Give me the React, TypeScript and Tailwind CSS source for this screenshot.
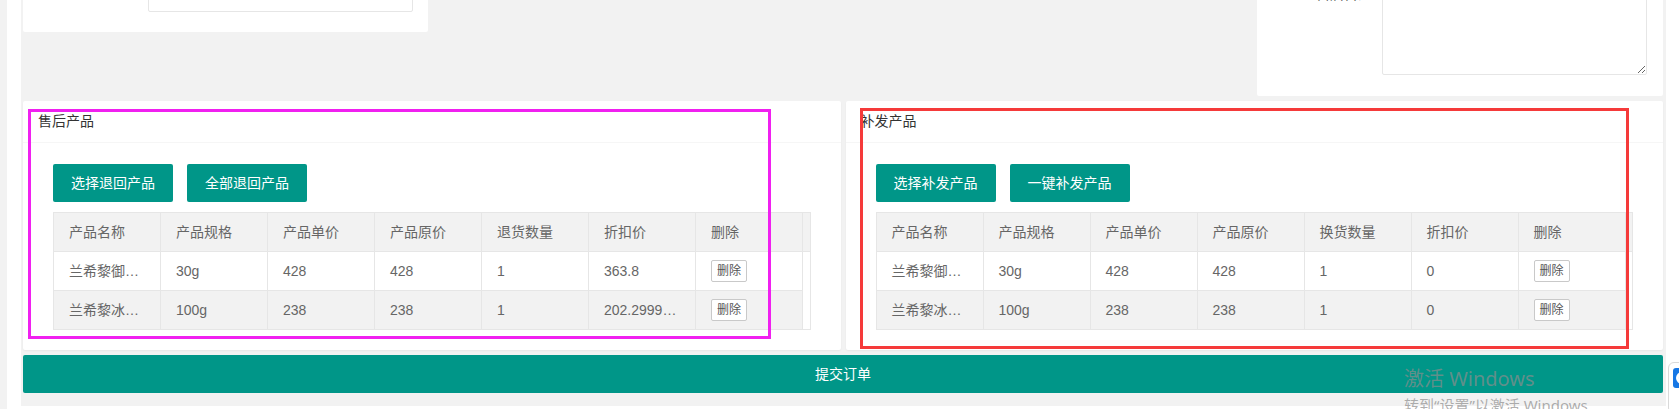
import React from 'react';

type Row = {
  name: string;
  spec: string;
  price: string;
  origin: string;
  qty: string;
  discount: string;
};

const returnRows: Row[] = [
  { name: '兰希黎御龙水润面霜', spec: '30g', price: '428', origin: '428', qty: '1', discount: '363.8' },
  { name: '兰希黎冰泉补水面膜', spec: '100g', price: '238', origin: '238', qty: '1', discount: '202.29999999999998' },
];

const resendRows: Row[] = [
  { name: '兰希黎御龙水润面霜', spec: '30g', price: '428', origin: '428', qty: '1', discount: '0' },
  { name: '兰希黎冰泉补水面膜', spec: '100g', price: '238', origin: '238', qty: '1', discount: '0' },
];

const ProductTable: React.FC<{ qtyLabel: string; rows: Row[] }> = ({ qtyLabel, rows }) => {
  const heads = ['产品名称', '产品规格', '产品单价', '产品原价', qtyLabel, '折扣价', '删除'];
  return (
    <div className="w-full border border-[#e6e6e6] text-[14px] text-[#666]">
      <div className="flex h-[39px] border-b border-[#e6e6e6] bg-[#f2f2f2]">
        {heads.map((h) => (
          <div key={h} className="w-[107px] shrink-0 border-r border-[#e6e6e6] px-[15px] leading-[38px] truncate">
            {h}
          </div>
        ))}
        <div className="flex-1" />
      </div>
      {rows.map((r, i) => (
        <div
          key={r.name}
          className={`flex w-[749px] ${i === rows.length - 1 ? 'h-[38px]' : 'h-[39px] border-b border-[#e6e6e6]'} ${i % 2 === 1 ? 'bg-[#f2f2f2]' : 'bg-white'}`}
        >
          {[r.name, r.spec, r.price, r.origin, r.qty, r.discount].map((v, j) => (
            <div key={j} className="w-[107px] shrink-0 border-r border-[#e6e6e6] px-[15px] leading-[38px] truncate">
              {v}
            </div>
          ))}
          <div className="w-[107px] shrink-0 border-r border-[#e6e6e6] px-[15px] flex items-center">
            <button className="h-[22px] px-[5px] border border-[#c9c9c9] rounded-[2px] bg-white text-[12px] leading-[20px] text-[#555]">
              删除
            </button>
          </div>
        </div>
      ))}
    </div>
  );
};

const Panel: React.FC<{ title: string; actions: string[]; qtyLabel: string; rows: Row[] }> = ({ title, actions, qtyLabel, rows }) => (
  <div className="bg-white rounded-[2px] shadow-[0_1px_2px_0_rgba(0,0,0,0.05)]">
    <div className="h-[42px] leading-[41px] px-[15px] border-b border-[#f6f6f6] text-[14px] text-[#333]">{title}</div>
    <div className="px-[30px] pt-[21px] pb-[20px]">
      <div className="flex gap-[14px] mb-[10px]">
        {actions.map((a) => (
          <button key={a} className="h-[38px] w-[120px] rounded-[2px] bg-[#009688] text-white text-[14px]">
            {a}
          </button>
        ))}
      </div>
      <ProductTable qtyLabel={qtyLabel} rows={rows} />
    </div>
  </div>
);

export default function App() {
  return (
    <div className="relative flex w-[1679px] h-[409px] overflow-hidden bg-white font-['Liberation_Sans','Noto_Sans_CJK_SC',sans-serif]">
      <div className="w-[7px] bg-[#f2f2f2]" />
      <div className="w-[14px]" />
      <div className="w-[1645px] h-[406px] bg-[#f2f2f2] pl-[2px] pr-[3px] flex flex-col">
        {/* scrolled-off form cards */}
        <div className="-mt-[40px] flex justify-between items-start">
          <div className="w-[405px] bg-white rounded-[2px] px-[15px] pt-[14px] pb-[20px] flex">
            <label className="w-[110px] pr-[10px] text-right text-[14px] leading-[20px] text-[#333]">收货人</label>
            <input className="flex-1 h-[38px] border border-[#e6e6e6] rounded-[2px] bg-white" />
          </div>
          <div className="w-[406px] bg-white rounded-[2px] px-[16px] pt-[15px] pb-[21px] flex">
            <label className="w-[109px] pt-[9px] pr-[10px] text-right text-[14px] leading-[20px] text-[#333]">售后备注</label>
            <textarea className="flex-1 h-[100px] border border-[#e6e6e6] rounded-[2px] bg-white" />
          </div>
        </div>

        <div className="mt-[5px] grid grid-cols-2 gap-[5px]">
          <Panel title="售后产品" actions={['选择退回产品', '全部退回产品']} qtyLabel="退货数量" rows={returnRows} />
          <Panel title="补发产品" actions={['选择补发产品', '一键补发产品']} qtyLabel="换货数量" rows={resendRows} />
        </div>

        <button className="mt-[5px] h-[38px] w-full rounded-[2px] bg-[#009688] text-white text-[14px]">提交订单</button>
      </div>

      {/* annotation boxes */}
      <div className="absolute left-[28px] top-[109px] w-[743px] h-[230px] border-[3px] border-[#f020f0]" />
      <div className="absolute left-[860px] top-[108px] w-[769px] h-[241px] border-[3px] border-[#f53a3a]" />

      {/* floating side widget */}
      <div className="absolute left-[1668px] top-[362px] w-[20px] h-[52px] border border-[#d9d9d9] rounded-l-[6px] bg-white">
        <div className="absolute left-[4px] top-[5px] w-[20px] h-[20px] rounded-[3px] bg-[#1677e5] flex items-center pl-[2px]">
          <svg width="14" height="14" viewBox="0 0 14 14">
            <circle cx="7" cy="7" r="6" fill="white" />
            <path d="M8.5 4 L5 7 L8.5 10" stroke="#1677e5" strokeWidth="1.8" fill="none" />
          </svg>
        </div>
      </div>

      {/* windows activation watermark */}
      <div className="absolute left-[1404px] top-[365px] text-[20px] leading-[28px] text-[rgba(140,140,140,0.7)] font-['Noto_Sans','Noto_Sans_CJK_SC',sans-serif] whitespace-nowrap">
        激活 Windows
      </div>
      <div className="absolute left-[1404px] top-[395px] text-[15px] leading-[20px] text-[rgba(140,140,140,0.7)] font-['Noto_Sans','Noto_Sans_CJK_SC',sans-serif] whitespace-nowrap">
        转到“设置”以激活 Windows
      </div>
    </div>
  );
}
